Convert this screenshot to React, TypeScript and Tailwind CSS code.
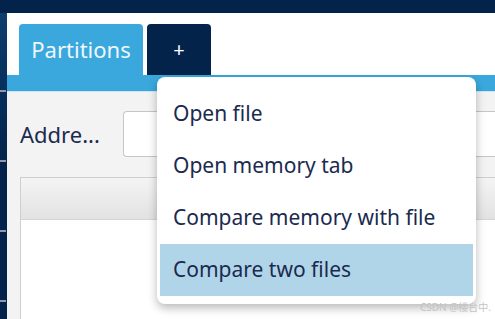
const items = ["Open file", "Open memory tab", "Compare memory with file", "Compare two files"]

export default function App() {
  return (
    <div className="relative flex h-[319px] w-[495px] flex-col overflow-hidden bg-[#03234b] font-['Noto_Sans',sans-serif]">
      <div className="h-[13px] shrink-0" />
      <div className="flex min-h-0 flex-1">
        {/* left edge strip */}
        <div className="flex w-[7px] shrink-0 flex-col bg-gradient-to-b from-[#0d3d6e] via-[#03234b] to-[#03234b]">
          <div className="h-[77px]" />
          <div className="h-[2px] w-[6px] bg-[#8d9bb0]" />
          <div className="h-[68px]" />
          <div className="h-[2px] w-[6px] bg-[#8d9bb0]" />
          <div className="h-[68px]" />
          <div className="h-[2px] w-[6px] bg-[#8d9bb0]" />
          <div className="h-[68px]" />
          <div className="h-[2px] w-[6px] bg-[#8d9bb0]" />
        </div>

        <div className="flex min-w-0 flex-1 flex-col overflow-hidden bg-white">
          {/* tab strip */}
          <div className="flex h-[62px] shrink-0 items-end gap-[4px] px-[12px]">
            <div className="flex h-[51px] w-[124px] items-center justify-center rounded-t-[4px] bg-[#3aa8dc] text-[22px] text-[#eef7fc]">
              Partitions
            </div>
            <div className="flex h-[51px] w-[64px] items-center justify-center rounded-t-[4px] bg-[#03234b] text-[20px] text-white">
              +
            </div>
          </div>
          <div className="h-[17px] shrink-0 bg-[#3aa8dc] shadow-[inset_0_-1px_0_#cfe7f4]" />

          {/* content */}
          <div className="flex flex-1 flex-col bg-[#f3f3f3] pl-[13px] pt-[19px]">
            <div className="flex items-center">
              <span className="w-[103px] text-[22px] text-[#1b2a4f]">Addre...</span>
              <div className="h-[46px] flex-1 rounded-l-[4px] border border-r-0 border-[#c6c6c6] bg-white" />
            </div>
            <div className="mt-[20px] flex flex-1 flex-col border border-r-0 border-b-0 border-[#cfcfcf] bg-white">
              <div className="h-[42px] border-b border-[#d5d5d5] bg-gradient-to-b from-[#f4f4f4] to-[#e2e2e2]" />
            </div>
          </div>
        </div>
      </div>

      {/* dropdown menu */}
      <div className="absolute left-[157px] top-[77px] flex w-[319px] flex-col rounded-[8px] bg-white px-[3px] pb-[8px] pt-[11px] shadow-[0_4px_10px_rgba(0,0,0,0.28)]">
        {items.map((label, i) => (
          <div
            key={label}
            className={
              i === 3
                ? "flex h-[52px] items-center bg-[#b1d5e8] pl-[13px] text-[21px] text-[#1b2a4f]"
                : "flex h-[52px] items-center pl-[13px] text-[21px] text-[#1b2a4f]"
            }
          >
            {label}
          </div>
        ))}
      </div>

      <div className="absolute left-[420px] top-[302px] whitespace-nowrap font-['Noto_Sans','Noto_Sans_CJK_SC',sans-serif] text-[10px] leading-none text-[#c4c4c4]">
        CSDN @楼台中.
      </div>
    </div>
  )
}
